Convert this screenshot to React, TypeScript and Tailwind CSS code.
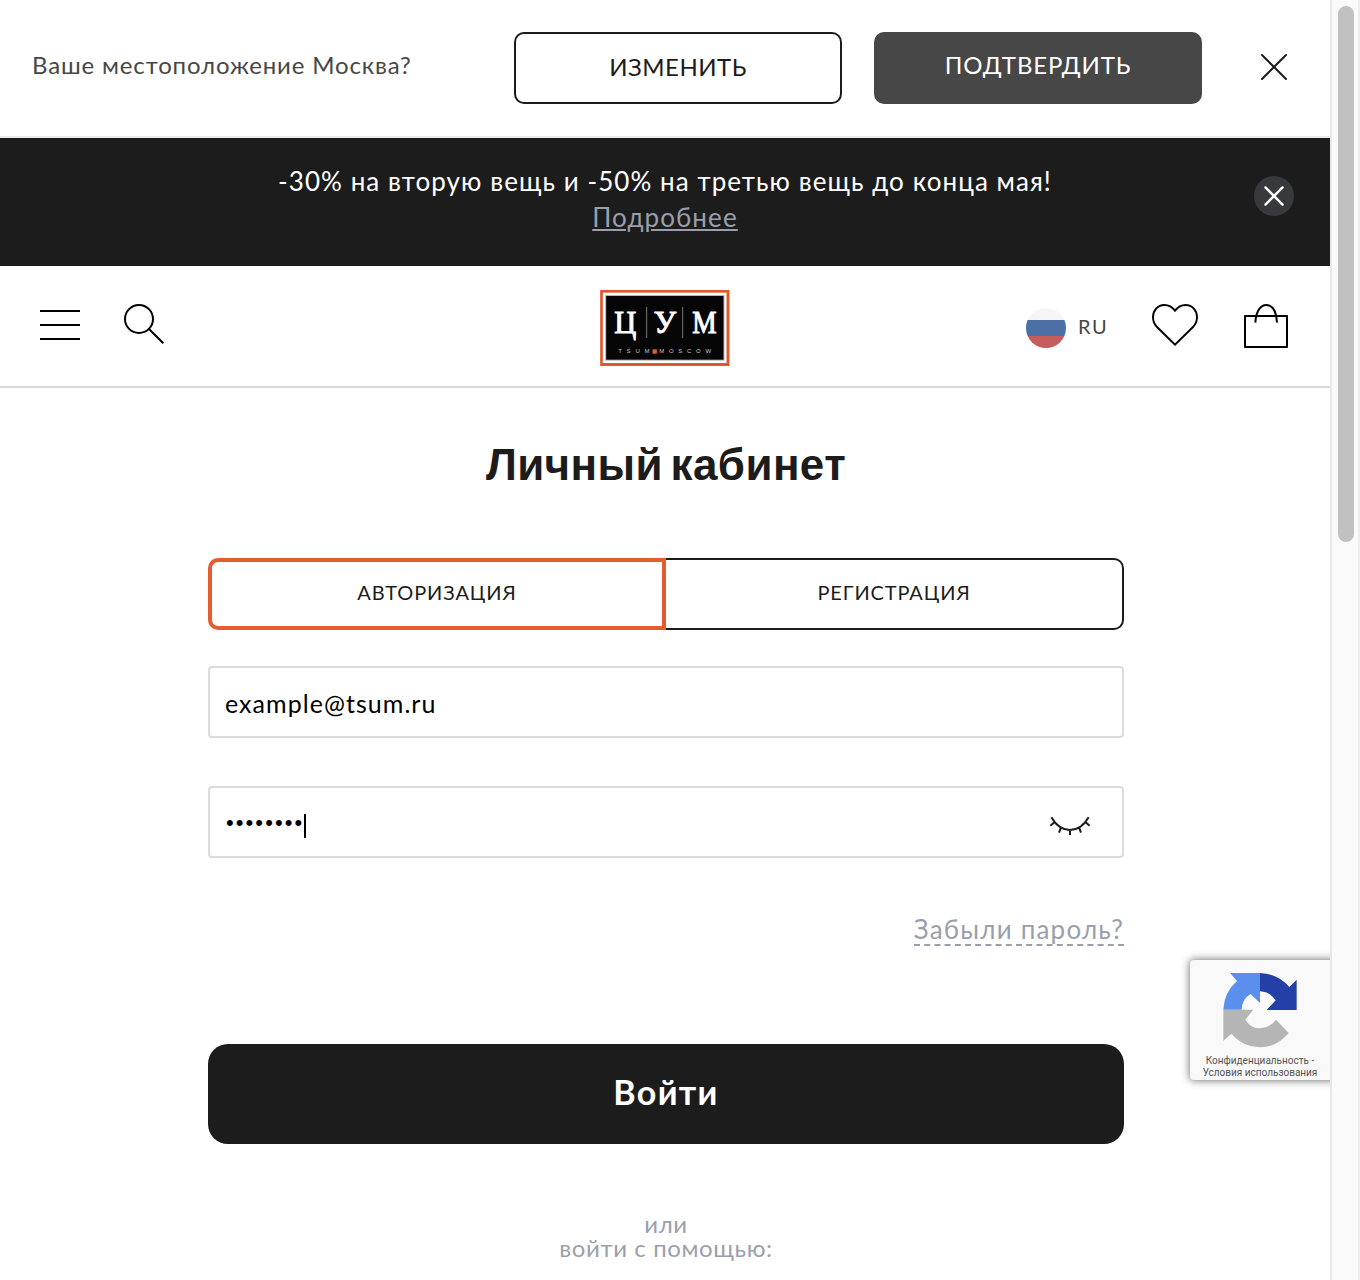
import type { ReactNode } from "react";

function CloseIcon({ className, width }: { className: string; width: number }) {
  return (
    <svg viewBox="0 0 28 28" className={className} fill="none" stroke="currentColor" strokeWidth={width} strokeLinecap="round">
      <path d="M2 2 26 26M26 2 2 26" />
    </svg>
  );
}

function SearchIcon() {
  return (
    <svg viewBox="0 0 40 40" className="h-10 w-10" fill="none" stroke="black" strokeWidth="2">
      <circle cx="15" cy="15" r="14" />
      <path d="M25 25 39.3 39.3" />
    </svg>
  );
}

function HeartIcon() {
  return (
    <svg viewBox="426 42 138 126" className="h-[42px] w-[46px]" fill="none" stroke="black" strokeWidth="5.8">
      <path d="M495 62C484 47 474 45 463 45C443 45 429 62 429 81C429 93 433 103 441 111L495 164L549 111C557 103 561 93 561 81C561 62 547 45 527 45C516 45 506 47 495 62Z" />
    </svg>
  );
}

function BagIcon() {
  return (
    <svg viewBox="702 42 132 132" className="h-11 w-11" fill="none" stroke="black" strokeWidth="6">
      <rect x="705" y="78" width="126" height="93" strokeLinejoin="round" />
      <path d="M736 98C738 62 752 45 769 45S799 62 801 98" />
    </svg>
  );
}

function ClosedEyeIcon() {
  return (
    <svg viewBox="1170 828 120 60" className="mt-[7px] h-5 w-10" fill="none" stroke="#1c1c1c" strokeWidth="6">
      <path d="M1174 832C1189 858 1208 870 1230 870S1271 858 1286 832M1184 846 1171 857M1203 863 1197 878M1230 870V885M1257 863 1263 878M1276 846 1289 857" />
    </svg>
  );
}

function Logo() {
  return (
    <svg viewBox="30 30 389 228" className="h-[76px] w-[130px]">
      <rect x="30" y="30" width="388" height="228" fill="#dc5a2c" />
      <rect x="38" y="38" width="371" height="211" fill="white" />
      <rect x="45" y="45" width="358" height="197" fill="#b5b5b5" />
      <rect x="48" y="48" width="352" height="191" fill="#050505" />
      <path d="M169.500 81V174M277.500 81V174" stroke="#777" strokeWidth="3" />
      <g fill="white" stroke="white" fontFamily="'Liberation Serif', serif" fontSize="94">
        <text x="72" y="160" strokeWidth="3" textLength="66" lengthAdjust="spacingAndGlyphs">Ц</text>
        <text x="191" y="160" strokeWidth="3" textLength="67" lengthAdjust="spacingAndGlyphs">У</text>
        <text x="306" y="160" strokeWidth="3" textLength="73" lengthAdjust="spacingAndGlyphs">М</text>
      </g>
      <g fill="#c4c4c4" fontFamily="'Liberation Sans', sans-serif" fontSize="18">
        <text x="84" y="220" textLength="94">TSUM</text>
        <text x="207" y="220" textLength="156">MOSCOW</text>
      </g>
      <rect x="187" y="208" width="13" height="13" fill="#e2602f" />
    </svg>
  );
}

function CaptchaIcon() {
  return (
    <svg viewBox="609 547 222 228" className="h-[76px] w-[74px]">
      <path fill="#5a8fee" d="M630 550H720V640L692 613Q666 627 665 660H610Q612 608 651 574Z" />
      <path fill="#2440a8" d="M720 550Q774 552 808 592L830 570V661H740L767 632Q750 606 720 605Z" />
      <path fill="#b5b5b5" d="M610 660H700L676 690Q692 716 720 716Q750 714 768 690L806 730Q770 773 720 773Q667 771 634 732L610 754Z" />
    </svg>
  );
}

function Field({ children }: { children: ReactNode }) {
  return (
    <div className="flex h-[72px] items-center justify-between rounded border-2 border-[#dbdbe1] pl-[15px] pr-8 text-black">
      {children}
    </div>
  );
}

export default function App() {
  return (
    <div className="flex h-[1280px] w-[1360px] overflow-hidden bg-white font-['Lato',sans-serif] text-[#1c1c1c]">
      <div className="relative w-[1330px] shrink-0 overflow-hidden">
        <section className="flex h-[138px] items-center border-b-2 border-[#e8ebea] pl-8 pr-[42px]">
          <p className="w-[482px] whitespace-nowrap pb-[6px] text-[24px] leading-8 tracking-[0.85px] text-[#474747]">
            Ваше местоположение Москва?
          </p>
          <button className="h-[72px] w-[328px] rounded-[10px] border-2 border-[#1c1c1c] pb-[2px] text-[24px] leading-8 tracking-[0.5px]">
            ИЗМЕНИТЬ
          </button>
          <button className="ml-8 h-[72px] w-[328px] rounded-[10px] bg-[#474747] pb-[6px] text-[24px] leading-8 tracking-[0.9px] text-white">
            ПОДТВЕРДИТЬ
          </button>
          <CloseIcon className="mb-[2px] ml-auto h-7 w-7" width={2} />
        </section>

        <section className="relative h-32 bg-[#1c1c1c] pt-[25px] text-center text-[26px] leading-9 text-white">
          <p className="tracking-[1.06px]">-30% на вторую вещь и -50% на третью вещь до конца мая!</p>
          <a className="tracking-[1.1px] text-[#9a9fac] underline decoration-2 underline-offset-[2px]">Подробнее</a>
          <button className="absolute right-9 top-[38px] flex h-10 w-10 items-center justify-center rounded-full bg-[#38393d]">
            <CloseIcon className="h-5 w-5" width={3.4} />
          </button>
        </section>

        <header className="flex h-[122px] items-start justify-between border-b-2 border-[#d9d9d9] pl-10 pr-[42px]">
          <div className="flex w-[560px] gap-11 pt-[38px]">
            <div className="flex w-10 flex-col gap-3 pt-[6px]">
              <span className="h-[2px] bg-black" />
              <span className="h-[2px] bg-black" />
              <span className="h-[2px] bg-black" />
            </div>
            <SearchIcon />
          </div>
          <div className="pt-6"><Logo /></div>
          <div className="flex w-[558px] items-start justify-end pt-[38px]">
            <div className="mt-1 flex h-10 w-10 flex-col overflow-hidden rounded-full">
              <span className="h-3 bg-[#f5f5f5]" />
              <span className="h-4 bg-[#4a70a5]" />
              <span className="h-3 bg-[#c75c5c]" />
            </div>
            <span className="ml-3 mt-3 w-[30px] text-[20px] leading-5 tracking-[1.6px] text-[#474747]">RU</span>
            <div className="ml-11"><HeartIcon /></div>
            <div className="ml-[46px]"><BagIcon /></div>
          </div>
        </header>

        <main className="ml-[208px] w-[916px] text-center">
          <h1 className="pt-[52px] font-['Liberation_Sans',sans-serif] text-[44px] font-bold leading-[50px] tracking-[0.4px] [word-spacing:-5px]">Личный кабинет</h1>
          <div className="mt-[68px] flex h-[72px] text-[20px] leading-6 tracking-[0.88px]">
            <button className="w-[458px] rounded-l-[10px] border-4 border-[#e65c2e] pb-[4px]">АВТОРИЗАЦИЯ</button>
            <button className="w-[458px] rounded-r-[10px] border-2 border-l-0 border-[#1c1c1c] pb-[4px]">РЕГИСТРАЦИЯ</button>
          </div>
          <div className="mt-9 flex flex-col gap-12">
            <Field>
              <span className="pt-[2px] text-[25px] leading-8 tracking-[1.05px]">example@tsum.ru</span>
            </Field>
            <Field>
              <div className="flex items-center pl-px">
                <span className="pt-[2px] font-['Liberation_Sans',sans-serif] text-[22px] leading-8 tracking-[2.08px]">••••••••</span>
                <span className="mt-2 h-6 w-[2px] bg-black" />
              </div>
              <ClosedEyeIcon />
            </Field>
          </div>
          <div className="mt-[56px] flex justify-end">
            <a className="border-b-2 border-dashed border-[#9a9fac] text-[26px] leading-[30px] tracking-[1.2px] text-[#9a9fac]">Забыли пароль?</a>
          </div>
          <button className="mt-[98px] block h-[100px] w-full rounded-[20px] bg-[#1c1c1c] pb-[5px] text-[34px] font-bold leading-10 tracking-[1.3px] text-white">
            Войти
          </button>
          <div className="mt-[68px] text-[24px] leading-6 tracking-[0.6px] text-[#9a9fac]">
            <p>или</p>
            <p>войти с помощью:</p>
          </div>
        </main>

        <aside className="absolute left-[1190px] top-[960px] h-[120px] w-[150px] overflow-hidden rounded-[4px] bg-[#f9f9f9] shadow-[0_0_8px_rgba(80,80,80,0.9)]">
          <div className="flex w-[140px] flex-col items-center pt-[12px]">
            <CaptchaIcon />
            <p className="mt-[7px] whitespace-nowrap text-center font-['Roboto',sans-serif] text-[10px] leading-[12px] text-[#555]">
              Конфиденциальность -<br />Условия использования
            </p>
          </div>
        </aside>
      </div>

      <div className="flex w-[30px] justify-center border-l-2 border-r-2 border-l-[#e8e8e8] border-r-[#ededed] bg-[#fafafa] pl-[2px] pt-[6px]">
        <div className="h-[536px] w-4 rounded-full bg-[#c1c1c1]" />
      </div>
    </div>
  );
}
